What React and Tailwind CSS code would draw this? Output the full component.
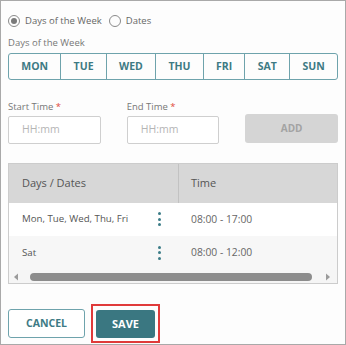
import React from "react";

const days = ["MON", "TUE", "WED", "THU", "FRI", "SAT", "SUN"];

function Kebab() {
  return (
    <div className="flex flex-col items-center gap-[2.5px]">
      <span className="block w-[3px] h-[3px] rounded-full bg-[#3b7c87]" />
      <span className="block w-[3px] h-[3px] rounded-full bg-[#3b7c87]" />
      <span className="block w-[3px] h-[3px] rounded-full bg-[#3b7c87]" />
    </div>
  );
}

function Row({ d, t, bg }) {
  return (
    <div className={`flex items-center ${bg}`}>
      <div className="w-[170px] flex items-center pl-[13px] pr-[18px] justify-between">
        <span className="text-[#555] text-[9.7px]">{d}</span>
        <Kebab />
      </div>
      <div className="pl-[12px] text-[#666] text-[10.3px]">{t}</div>
    </div>
  );
}

export default function App() {
  return (
    <div
      className="w-[346px] h-[345px] border border-[#a9a9a9] bg-[#fdfdfd] px-[7px] text-[11px] text-[#666]"
      style={{ fontFamily: '"Open Sans", "Noto Sans", sans-serif' }}
    >
      <div className="flex items-center h-[16px] mt-[12px] text-[9.5px]">
        <span className="w-[12px] h-[12px] rounded-full border border-[#8a8a8a] flex items-center justify-center">
          <span className="w-[6px] h-[6px] rounded-full bg-[#7a7a7a]" />
        </span>
        <span className="ml-[5px] text-[#666]">Days of the Week</span>
        <span className="ml-[7px] w-[12px] h-[12px] rounded-full border border-[#8a8a8a]" />
        <span className="ml-[5px] text-[#666]">Dates</span>
      </div>

      <div className="mt-[6px] h-[16px] leading-[16px] text-[9.5px] text-[#777]">Days of the Week</div>

      <div className="mt-[2px] flex h-[27px] border border-[#6ea3ac] rounded-[3px] overflow-hidden">
        {days.map((d, i) => (
          <div
            key={d}
            className={`flex-auto flex items-center justify-center font-bold text-[10.5px] text-[#3d7a84] ${i > 0 ? "border-l border-[#6ea3ac]" : ""}`}
          >
            {d}
          </div>
        ))}
      </div>

      <div className="mt-[19px] flex gap-[26px] items-end">
        <div className="w-[93px]">
          <div className="h-[16px] leading-[16px] text-[9.5px] text-[#777]">
            Start Time <span className="text-[#e04a3a]">*</span>
          </div>
          <div className="mt-[1px] h-[28px] border border-[#cfcfcf] rounded-[2px] bg-white flex items-center pl-[13px] text-[#b5b5b5] text-[10.5px]">
            HH:mm
          </div>
        </div>
        <div className="w-[93px]">
          <div className="h-[16px] leading-[16px] text-[9.5px] text-[#777]">
            End Time <span className="text-[#e04a3a]">*</span>
          </div>
          <div className="mt-[1px] h-[28px] border border-[#cfcfcf] rounded-[2px] bg-white flex items-center pl-[13px] text-[#b5b5b5] text-[10.5px]">
            HH:mm
          </div>
        </div>
        <div className="ml-auto mb-[1px] w-[93px] h-[29px] rounded-[3px] bg-[#d5d5d5] flex items-center justify-center font-bold text-[10px] text-[#a3a3a3]">
          ADD
        </div>
      </div>

      <div className="mt-[19px] border border-[#cccccc] bg-white">
        <div className="flex h-[39px] bg-[#d7d7d7] items-center">
          <div className="w-[170px] h-full flex items-center pl-[13px] border-r border-[#c2c2c2] text-[#555]">
            Days / Dates
          </div>
          <div className="pl-[12px] text-[#555]">Time</div>
        </div>
        <Row d="Mon, Tue, Wed, Thu, Fri" t="08:00 - 17:00" bg="bg-white h-[33px]" />
        <Row d="Sat" t="08:00 - 12:00" bg="bg-[#f7f7f7] h-[34px]" />
        <div className="flex items-center h-[13px] bg-[#f5f5f5] pl-[4px] pr-[6px]">
          <svg width="5" height="8" viewBox="0 0 5 8">
            <path d="M5 0.5 L1 4 L5 7.5 Z" fill="#9a9a9a" />
          </svg>
          <div className="flex-1 ml-[12px] mr-[14px] h-[8px] rounded-full bg-[#8c8c8c]" />
          <svg width="5" height="8" viewBox="0 0 5 8">
            <path d="M0 0.5 L4 4 L0 7.5 Z" fill="#9a9a9a" />
          </svg>
        </div>
      </div>

      <div className="mt-[20px] flex items-center">
        <div className="w-[77px] h-[29px] border border-[#6ea3ac] rounded-[3px] bg-white flex items-center justify-center font-bold text-[10.5px] text-[#3d7a84]">
          CANCEL
        </div>
        <div className="ml-[6px] border-2 border-[#e03a3a] pt-[4px] pb-[3px] px-[3px]">
          <div className="w-[59px] h-[28px] rounded-[3px] bg-[#3a7781] flex items-center justify-center font-bold text-white">
            SAVE
          </div>
        </div>
      </div>
    </div>
  );
}
